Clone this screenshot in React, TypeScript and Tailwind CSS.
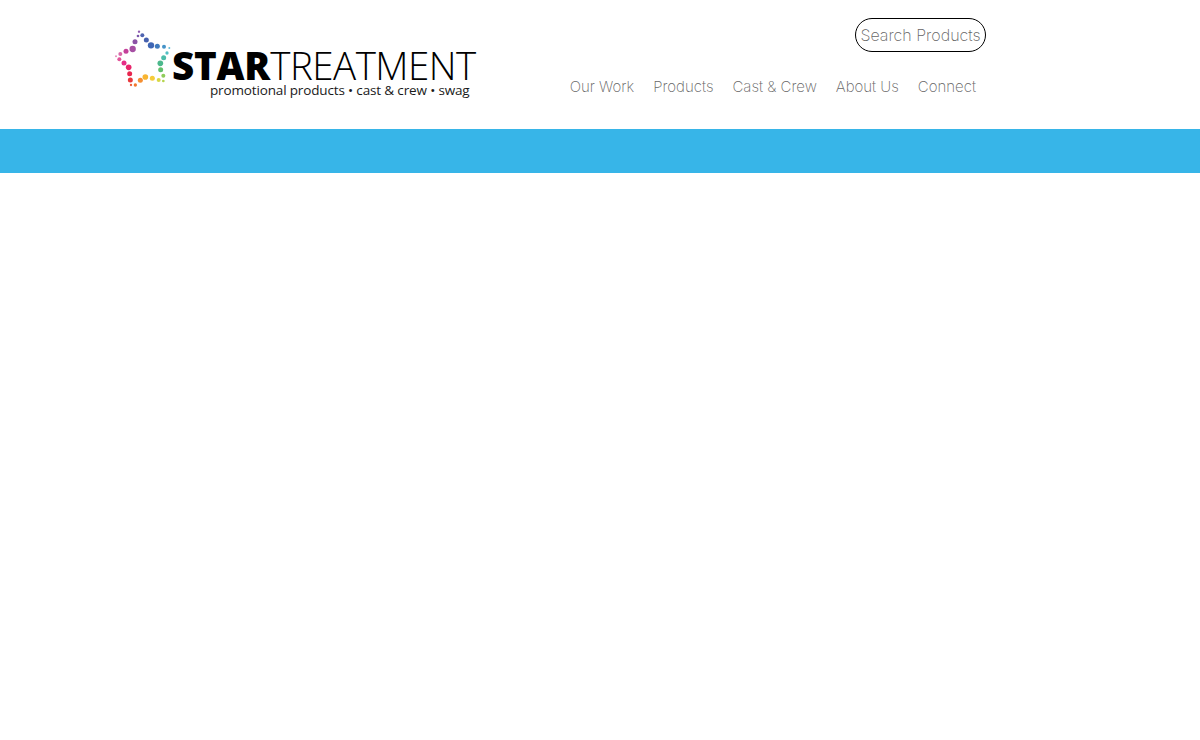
const DOTS = [
  [87, 20, 3.5, '#8e5bb0'], [97, 31, 6, '#4f64b0'], [84, 33, 4, '#7c57ab'], [75, 50, 7.5, '#8c52a6'],
  [68, 72, 9.5, '#a64fa3'], [48, 79, 7.5, '#c4409a'], [31, 87, 6, '#d869a9'], [18, 94, 3, '#e58bbb'],
  [28, 103, 6, '#e2559a'], [42, 114, 7.5, '#e52d86'], [56, 127, 8.5, '#e8246b'], [59, 146, 7.5, '#e8254f'],
  [61, 165, 7.5, '#e8383d'], [63, 180, 3.5, '#ee5a35'], [76, 180, 5, '#f2782f'], [91, 166, 7.5, '#f58f32'],
  [106, 156, 8.5, '#f8b531'], [127, 160, 7.5, '#f5cc3a'], [146, 165, 6, '#d8d845'], [160, 168, 4, '#b4d44e'],
  [160, 152, 6, '#8fcc5a'], [152, 134, 7.5, '#62bf6c'], [151, 115, 8.5, '#4cb88c'], [161, 98, 7.5, '#4cbca9'],
  [171, 84, 5, '#52bfc4'], [178, 69, 3, '#62bcd8'], [162, 65, 6, '#4593c8'], [142, 64, 7.5, '#3f7abd'],
  [123, 61, 9.5, '#3f66b4'], [109, 45, 7.5, '#4560ae'],
] as const

const NAV = ['Our Work', 'Products', 'Cast & Crew', 'About Us', 'Connect']

export default function App() {
  return (
    <div className="min-h-[740px] bg-white font-['Inter',sans-serif]">
      <header className="h-[129px] flex">
        <div className="ml-[110px] mt-[25px] w-[370px] flex items-start">
          <svg width="62" height="70" viewBox="0 0 186 210" className="shrink-0">
            {DOTS.map(([x, y, r, c], i) => (
              <circle key={i} cx={x} cy={y} r={r} fill={c} />
            ))}
          </svg>
          <div className="flex flex-col font-['Open_Sans',sans-serif] text-black">
            <div className="mt-[21px] h-[38px] flex items-center text-[38.5px] leading-none whitespace-nowrap">
              <span className="font-extrabold tracking-[-0.2px]">STAR</span>
              <span className="font-light tracking-[-0.5px]">TREATMENT</span>
            </div>
            <div className="ml-[38px] text-[13.5px] leading-[12px] font-medium tracking-[-0.15px] whitespace-nowrap text-[#1a1a1a]">
              promotional products • cast &amp; crew • swag
            </div>
          </div>
        </div>
        <div className="ml-[90px] w-[416px] flex flex-col items-end">
          <div className="mt-[18px] h-[34px] w-[131px] rounded-[17px] border border-black flex items-center justify-center text-[16px] font-extralight text-[#666] whitespace-nowrap">
            Search Products
          </div>
          <nav className="mt-[25px] mr-[10px] flex gap-[19px] text-[15px] leading-5 font-extralight text-[#666] whitespace-nowrap">
            {NAV.map((n) => (
              <a key={n}>{n}</a>
            ))}
          </nav>
        </div>
      </header>
      <div className="h-[44px] bg-[#37b5e8]" />
    </div>
  )
}
